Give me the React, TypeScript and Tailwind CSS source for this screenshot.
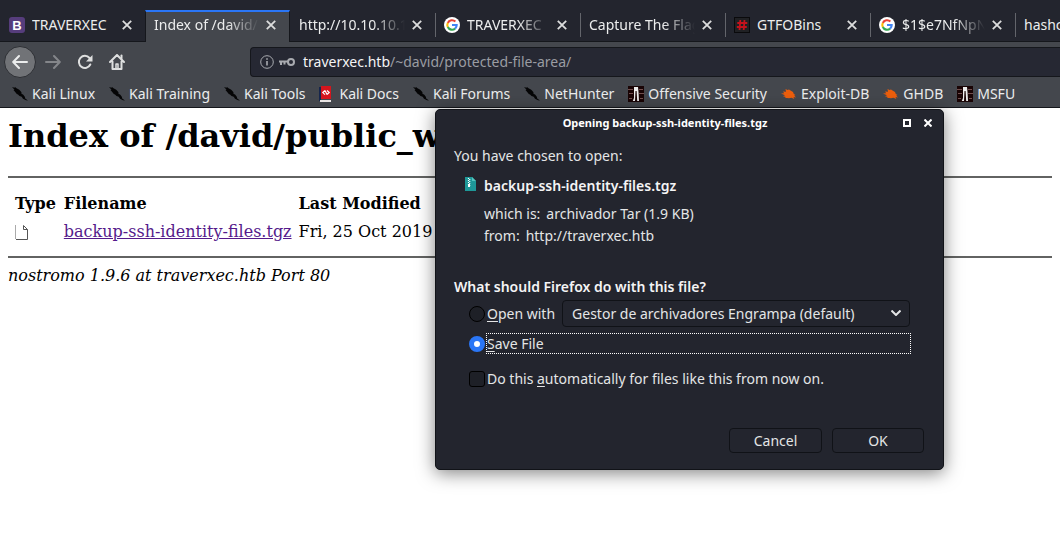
import React from "react";

const ui = "font-['Noto_Sans','Open_Sans',sans-serif]";

function Close() {
  return (
    <svg viewBox="0 0 10 10" className="size-[10px]" fill="none" stroke="currentColor" strokeWidth="1.8">
      <path d="M.8.8l8.4 8.4M9.2.8L.8 9.2" />
    </svg>
  );
}

function BootstrapIcon() {
  return (
    <span className="flex size-4 shrink-0 items-center justify-center rounded-[3px] bg-[#563d7c] font-['Liberation_Sans',sans-serif] text-[13px] leading-none font-bold text-white">
      B
    </span>
  );
}

function GoogleIcon() {
  return (
    <svg viewBox="0 0 16 16" className="size-4 shrink-0">
      <circle cx="8" cy="8" r="8" fill="#fff" />
      <g fill="none" strokeWidth="2.1">
        <path d="M11.4 4.6A4.7 4.7 0 0 0 3.8 6" stroke="#ea4335" />
        <path d="M3.8 5.9a4.7 4.7 0 0 0 0 4.2" stroke="#fbbc05" />
        <path d="M3.8 10a4.7 4.7 0 0 0 7.3 1.6" stroke="#34a853" />
        <path d="M8 8h4.7a4.7 4.7 0 0 1-1.6 3.6" stroke="#4285f4" />
      </g>
    </svg>
  );
}

function HashIcon() {
  return (
    <svg viewBox="0 0 16 16" className="size-4 shrink-0">
      <path fill="#0a0a0c" d="M0 0h16v16H0z" />
      <path fill="#202124" d="M1 1h14v14H1z" />
      <path stroke="#c4121c" strokeWidth="1.8" d="M6.3 3L5.5 13M10.5 3L9.7 13M3.3 6h10M2.8 10h10" />
    </svg>
  );
}

function DragonIcon() {
  return (
    <svg viewBox="0 0 16 16" className="size-4 shrink-0" fill="#050506">
      <path d="M0 1l2.500.8L3 1l1.500 1.300L6 3l1.500 1L9.500 6.200l-.2 1.300 2 1.200 1.500 2 .4 1.800L16 14.500l-2-.2-3-1.500-1.300-2L7.500 10 6 8.600 4.800 8 3.200 6 1.500 4l1-.3z" />
    </svg>
  );
}

function DocsIcon() {
  return (
    <svg viewBox="0 0 16 16" className="size-4 shrink-0">
      <path fill="#16264d" d="M0 1h2v14H0z" />
      <path fill="#d5161d" d="M2 0h10v13H2z" />
      <path fill="#e9e4e4" d="M1 14h11v2H1z" />
      <path fill="none" stroke="#fff" strokeWidth="1.200" d="M6 4.500L3.800 6.600l2.200 2M8 4.500l2.200 2L8 8.600M6 4.500l2 4.100" />
    </svg>
  );
}

function OffsecIcon() {
  return (
    <svg viewBox="0 0 16 16" className="size-4 shrink-0">
      <path fill="#190405" d="M0 0h16v16H0z" />
      <path stroke="#74504f" strokeWidth="1" d="M0 3.500h5M1 7.500h4M11 3.500h4M11 7.500h5M1 12.500h3M12 12.500h3" />
      <path fill="#eee" d="M6 1h4l.5 5 .5 9H9.200L8.600 5H7.500L7 15H4.800L6 12z" />
    </svg>
  );
}

function BugIcon() {
  return (
    <svg viewBox="0 0 16 16" className="size-4 shrink-0">
      <path fill="#ec5e0c" d="M4.500 3l2 .9L8 3.500l1.500 1 2.500 1.600.8 2L14.500 9l-1.300.4L15 11.500l-2.500-.4.8 2-2.800-1.300-2.500.4-2-.2L4 12l.8-1L2 10.200l2-1L0 7.500l3.200-.3L2 5.500l3 .3z" />
    </svg>
  );
}

type Tab = { label: string; icon?: React.ReactNode; active?: boolean; fade?: boolean };
const tabs: Tab[] = [
  { label: "TRAVERXEC", icon: <BootstrapIcon /> },
  { label: "Index of /david/public_www", active: true, fade: true },
  { label: "http://10.10.10.165/", fade: true },
  { label: "TRAVERXEC", icon: <GoogleIcon />, fade: true },
  { label: "Capture The Flag", fade: true },
  { label: "GTFOBins", icon: <HashIcon /> },
  { label: "$1$e7NfNpNi", icon: <GoogleIcon />, fade: true },
  { label: "hashcat" },
];

const bookmarks = [
  { label: "Kali Linux", icon: <DragonIcon /> },
  { label: "Kali Training", icon: <DragonIcon /> },
  { label: "Kali Tools", icon: <DragonIcon /> },
  { label: "Kali Docs", icon: <DocsIcon /> },
  { label: "Kali Forums", icon: <DragonIcon /> },
  { label: "NetHunter", icon: <DragonIcon /> },
  { label: "Offensive Security", icon: <OffsecIcon /> },
  { label: "Exploit-DB", icon: <BugIcon /> },
  { label: "GHDB", icon: <BugIcon /> },
  { label: "MSFU", icon: <OffsecIcon /> },
];

function TabStrip() {
  return (
    <div className="flex h-[42px] items-end border-b border-[#15171c] bg-[#23252e]">
      {tabs.map((t, i) => (
        <div
          key={i}
          className={`flex h-8 w-[145px] shrink-0 items-center gap-[7px] pr-[13px] text-[#eceded] ${
            t.active
              ? "-mb-px border-x border-t-2 border-x-[#15171c] border-t-[#2a76f6] bg-[#44474d] pb-1 pl-2"
              : "pl-[9px]"
          } ${i > 2 ? "relative before:absolute before:left-0 before:h-6 before:w-px before:bg-[#63656b]" : ""}`}
        >
          {t.icon}
          <span
            className={`min-w-0 flex-1 overflow-hidden whitespace-nowrap ${
              t.fade ? "[mask-image:linear-gradient(to_left,transparent,black_32px)]" : ""
            }`}
          >
            {t.label}
          </span>
          <button aria-label={`Close ${t.label}`} className="shrink-0 text-[#dcdddd]">
            <Close />
          </button>
        </div>
      ))}
    </div>
  );
}

function NavBar() {
  return (
    <div className="flex h-10 items-center bg-[#44474d] pl-1">
      <button aria-label="Back" className="flex size-8 items-center justify-center rounded-full border border-[#2d2f34] bg-[#717377] text-[#eceded]">
        <svg viewBox="0 0 16 16" className="size-4" fill="none" stroke="currentColor" strokeWidth="2" strokeLinecap="round" strokeLinejoin="round">
          <path d="M15 8H1.500M7 2L1.200 8 7 14" />
        </svg>
      </button>
      <button aria-label="Forward" className="ml-[9px] text-[#84868a]">
        <svg viewBox="0 0 16 16" className="size-4" fill="none" stroke="currentColor" strokeWidth="2" strokeLinecap="round" strokeLinejoin="round">
          <path d="M1 8h13.500M9 2l5.800 6L9 14" />
        </svg>
      </button>
      <button aria-label="Reload" className="ml-4 text-[#dedfdf]">
        <svg viewBox="0 0 16 16" className="size-4" fill="none" stroke="currentColor" strokeWidth="2" strokeLinecap="round">
          <path d="M13.300 10.500A6 6 0 1 1 12.500 4" />
          <path d="M15.500 1v6.500H9z" fill="currentColor" stroke="none" />
        </svg>
      </button>
      <button aria-label="Home" className="ml-4 text-[#dedfdf]">
        <svg viewBox="0 0 16 16" className="size-4" fill="none" stroke="currentColor" strokeWidth="2" strokeLinecap="round" strokeLinejoin="round">
          <path d="M1 8l7-7 7 7M3.500 7.500V15h9V7.500" />
          <path d="M7 14v-4h2v4" strokeWidth="1.500" />
          <path d="M12.500 1.500v3" />
        </svg>
      </button>
      <div className="ml-[125px] flex h-[30px] min-w-0 flex-1 items-center rounded-l-[4px] border border-r-0 border-[#15171c] bg-[#262833] pl-[9px]">
        <svg viewBox="0 0 14 14" className="size-[14px] shrink-0" fill="none" stroke="#a9abb0">
          <circle cx="7" cy="7" r="6.300" />
          <path d="M7 6v4.500M7 3.200v1.600" strokeWidth="1.600" />
        </svg>
        <svg viewBox="0 0 16 10" className="ml-[5px] h-[10px] w-4 shrink-0" fill="none" stroke="#a9abb0" strokeWidth="2">
          <circle cx="12" cy="5" r="3" />
          <path d="M9 4.500H0M2 5v3M5.500 5v2.500" />
        </svg>
        <div className="ml-2 whitespace-nowrap text-[#9a9ca2]">
          <span className="text-[#f4f4f5]">traverxec.htb</span>/~david/protected-file-area/
        </div>
      </div>
    </div>
  );
}

function Bookmarks() {
  return (
    <div className="flex h-[26px] items-center gap-[14px] border-b border-[#15171c] bg-[#44474d] pb-[2px] pl-3 text-[#eceded]">
      {bookmarks.map((b) => (
        <a key={b.label} href="#" className="flex shrink-0 items-center gap-1 whitespace-nowrap">
          {b.icon}
          {b.label}
        </a>
      ))}
    </div>
  );
}

function Listing() {
  return (
    <main className="px-2 pt-[9px] font-['DejaVu_Serif',serif] text-base text-black">
      <h1 className="text-[32px] leading-[38px] font-bold whitespace-nowrap">Index of /david/public_www</h1>
      <hr className="mt-[21px] border-t-2 border-[#626362]" />
      <table className="mt-[13px] border-separate border-spacing-x-[7px] border-spacing-y-0 text-left whitespace-nowrap">
        <thead>
          <tr className="h-[26px]">
            <th className="pr-px">Type</th>
            <th>Filename</th>
            <th>Last Modified</th>
          </tr>
        </thead>
        <tbody>
          <tr className="h-[30px]">
            <td>
              <svg viewBox="0 0 13 16" className="h-4 w-[13px]" fill="none" stroke="#555">
                <path d="M.5 1v14" stroke="#aaa" />
                <path d="M1 15.500h11.500V5.500L8.500 1.500v4h4" />
              </svg>
            </td>
            <td>
              <a href="#" className="text-[#551a8b] underline">backup-ssh-identity-files.tgz</a>
            </td>
            <td>Fri, 25 Oct 2019 17:02</td>
          </tr>
        </tbody>
      </table>
      <hr className="mt-[9px] border-t-2 border-[#626362]" />
      <address className="mt-[7px] leading-[22px] italic">nostromo 1.9.6 at traverxec.htb Port 80</address>
    </main>
  );
}

function Dialog() {
  return (
    <div
      role="dialog"
      aria-labelledby="dialog-title"
      className={`absolute top-[109px] left-[435px] w-[509px] rounded-[5px] border border-[#111318] bg-[#23252e] pb-4 text-[#e4e5e6] shadow-[0_3px_18px_rgba(0,0,0,0.5)] ${ui}`}
    >
      <div className="flex h-[26px] items-center gap-[13px] pr-[11px] text-white">
        <h2 id="dialog-title" className="flex-1 pl-1 text-center text-[11px] font-bold">
          Opening backup-ssh-identity-files.tgz
        </h2>
        <button aria-label="Maximize" className="size-2 border-2 border-white" />
        <button aria-label="Close">
          <svg viewBox="0 0 8 8" className="size-2" stroke="currentColor" strokeWidth="2">
            <path d="M.5.5l7 7M7.500.5l-7 7" />
          </svg>
        </button>
      </div>
      <div className="px-[18px] pt-[9px]">
        <p className="leading-[22px]">You have chosen to open:</p>
        <div className="mt-2 flex items-start gap-2 pl-[11px]">
          <svg viewBox="0 0 11 14" className="mt-[2px] h-[14px] w-[11px] shrink-0">
            <path fill="#1e9898" d="M0 0h7l4 4v10H0z" />
            <path fill="#54c5bf" d="M7 0l4 4H7z" />
            <path stroke="#fff" strokeWidth="1.200" strokeDasharray="1 1" d="M3.500 1v7M4.700 2v7" />
            <path fill="#fff" d="M3 7h2v3H3z" />
          </svg>
          <div>
            <p className="leading-[22px] font-semibold text-[#f4f4f5]">backup-ssh-identity-files.tgz</p>
            <dl className="mt-[6px] leading-[22px]">
              <div className="flex gap-[6px]"><dt>which is:</dt><dd>archivador Tar (1.9 KB)</dd></div>
              <div className="flex gap-[6px]"><dt>from:</dt><dd>http://traverxec.htb</dd></div>
            </dl>
          </div>
        </div>
        <p className="mt-7 leading-[24px] font-semibold text-[#f4f4f5]">What should Firefox do with this file?</p>
        <div className="pr-[14px] pl-[15px]">
          <div className="mt-px flex items-center pr-px">
            <input id="open" type="radio" name="action" className="size-4 appearance-none rounded-full border border-black bg-[#1e2027]" />
            <label htmlFor="open" className="ml-[2px]"><u className="underline-offset-2">O</u>pen with</label>
            <div className="relative ml-[7px] flex-1">
              <select aria-label="Application" className="h-[27px] w-full appearance-none rounded-[4px] border border-[#101217] bg-[#23252e] pl-[9px]">
                <option>Gestor de archivadores Engrampa (default)</option>
              </select>
              <svg viewBox="0 0 10 6" className="pointer-events-none absolute top-[10px] right-[9px] h-[6px] w-[10px]" fill="none" stroke="currentColor" strokeWidth="2">
                <path d="M.5.5L5 5 9.500.5" />
              </svg>
            </div>
          </div>
          <div className="mt-[6px] flex items-center">
            <input id="save" type="radio" name="action" defaultChecked className="size-4 appearance-none rounded-full border-[5px] border-[#2a76f6] bg-white" />
            <label htmlFor="save" className="ml-px flex-1 border border-dotted border-white leading-[19px]"><u className="underline-offset-2">S</u>ave File</label>
          </div>
          <div className="mt-[14px] flex items-center">
            <input id="auto" type="checkbox" className="size-4 appearance-none rounded-[3px] border border-black bg-[#1e2027]" />
            <label htmlFor="auto" className="ml-[2px] leading-[22px]">Do this <u className="underline-offset-2">a</u>utomatically for files like this from now on.</label>
          </div>
        </div>
        <div className="mt-[38px] flex justify-end gap-[10px] pr-[1px]">
          <button className="h-[25px] w-[93px] rounded-[4px] border border-[#101217]">Cancel</button>
          <button className="h-[25px] w-[92px] rounded-[4px] border border-[#101217]">OK</button>
        </div>
      </div>
    </div>
  );
}

export default function App() {
  return (
    <div className="relative min-h-screen overflow-hidden bg-white text-sm">
      <header className={ui}>
        <TabStrip />
        <NavBar />
        <Bookmarks />
      </header>
      <Listing />
      <Dialog />
    </div>
  );
}
